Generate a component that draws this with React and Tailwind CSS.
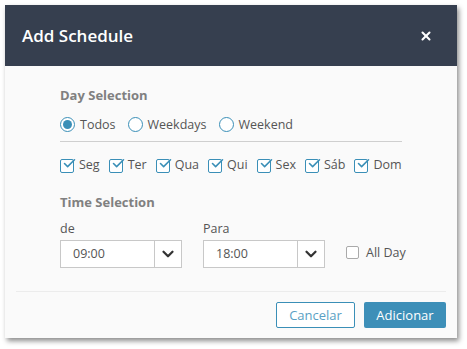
import { X, ChevronDown, Check } from 'lucide-react'

const days = ['Seg', 'Ter', 'Qua', 'Qui', 'Sex', 'Sáb', 'Dom']

function Radio({ label, checked }) {
  return (
    <label className="flex items-center gap-[5px]">
      <span className="flex h-[15px] w-[15px] items-center justify-center rounded-full border border-[#3a8fb7] bg-white">
        {checked && <span className="h-[9px] w-[9px] rounded-full bg-[#3a8fb7]" />}
      </span>
      <span>{label}</span>
    </label>
  )
}

function DayBox({ label }) {
  return (
    <label className="flex items-center gap-[5px]">
      <span className="relative h-[14px] w-[14px] rounded-[2px] border border-[#3a8fb7] bg-white">
        <Check className="absolute -top-[4px] left-[1px] h-[15px] w-[15px] text-[#3a8fb7]" strokeWidth={2.5} />
      </span>
      <span>{label}</span>
    </label>
  )
}

function TimeSelect({ value }) {
  return (
    <div className="flex h-[28px] w-[122px] border border-[#c8c8c8] bg-white">
      <div className="flex flex-1 items-center pl-[12px]">{value}</div>
      <div className="flex w-[27px] items-center justify-center border-l border-[#c8c8c8]">
        <ChevronDown className="h-[18px] w-[18px] text-[#333]" strokeWidth={3} />
      </div>
    </div>
  )
}

export default function App() {
  return (
    <div className="h-[349px] w-[467px] bg-white pl-[5px] pt-[5px] font-['Open_Sans',sans-serif] text-[12.5px] text-[#555]">
      <div className="w-[452px] bg-[#fafafa] shadow-[2px_3px_5px_rgba(0,0,0,0.45)]">
        <div className="flex h-[61px] items-center justify-between bg-[#363f4f] pl-[17px] pr-[24px]">
          <h1 className="text-[17px] font-semibold text-white">Add Schedule</h1>
          <X className="h-[14px] w-[14px] text-white" strokeWidth={3.5} />
        </div>

        <div className="px-[55px] pt-[20px]">
          <h2 className="text-[13px] font-bold text-[#808080]">Day Selection</h2>
          <div className="mt-[10px] flex items-center gap-[12px]">
            <Radio label="Todos" checked />
            <Radio label="Weekdays" />
            <Radio label="Weekend" />
          </div>
          <div className="mt-[7px] h-px bg-[#cfcfcf]" />
          <div className="mt-[14px] flex items-center gap-[9px]">
            {days.map((d) => (
              <DayBox key={d} label={d} />
            ))}
          </div>

          <h2 className="mt-[18px] text-[13px] font-bold text-[#808080]">Time Selection</h2>
          <div className="mt-[7px] flex items-end gap-[21px]">
            <div>
              <div className="mb-[2px]">de</div>
              <TimeSelect value="09:00" />
            </div>
            <div>
              <div className="mb-[2px]">Para</div>
              <TimeSelect value="18:00" />
            </div>
            <label className="mb-[6px] flex shrink-0 items-center gap-[7px] whitespace-nowrap">
              <span className="h-[13px] w-[13px] rounded-[2px] border border-[#aaa] bg-white" />
              <span>All Day</span>
            </label>
          </div>
        </div>

        <div className="mx-[11px] mt-[23px] h-px bg-[#ececec]" />
        <div className="flex justify-end gap-[9px] px-[11px] pb-[10px] pt-[10px]">
          <button className="h-[26px] w-[79px] rounded-[2px] border border-[#3a8fb7] bg-white text-[13px] text-[#5a9fc4]">
            Cancelar
          </button>
          <button className="h-[26px] w-[82px] rounded-[2px] bg-[#3d8fb8] text-[13px] text-white">
            Adicionar
          </button>
        </div>
      </div>
    </div>
  )
}
